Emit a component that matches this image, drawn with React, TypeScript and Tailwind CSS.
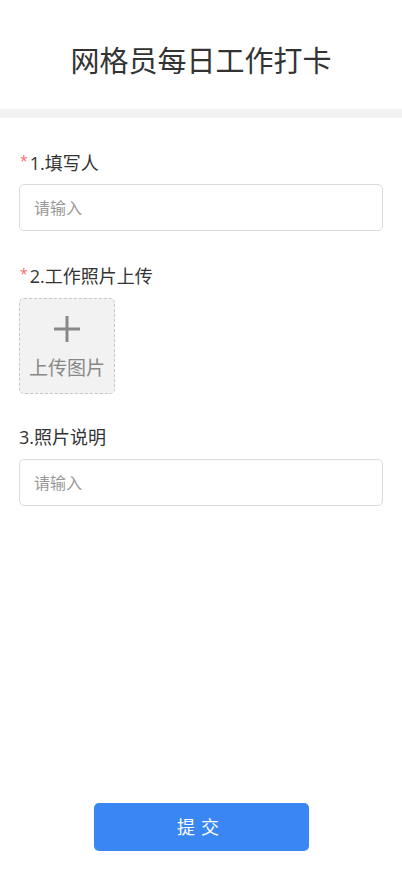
export default function App() {
  const font = { fontFamily: '"Open Sans", "Noto Sans CJK SC", sans-serif' };

  return (
    <div className="flex min-h-screen flex-col bg-white text-[#333]" style={font}>
      {/* Header */}
      <div className="pt-[41px] pb-[28px] text-center text-[29px] leading-[40px]">网格员每日工作打卡</div>
      <div className="h-[9px] bg-[#f2f2f2]" />

      {/* Form */}
      <div className="flex flex-col px-[19px]">
        <div className="mt-[32px] flex items-start text-[18px] leading-[26px]">
          <span className="mr-[2px] ml-[1px] mt-[1px] text-[14px] leading-[20px] text-[#f56c6c]">*</span>
          <span>1.填写人</span>
        </div>
        <input
          placeholder="请输入"
          className="mt-[8px] h-[47px] w-full rounded-[5px] border border-[#dcdcdc] px-[14px] text-[16px] outline-none placeholder:text-[#999]"
        />

        <div className="mt-[32px] flex items-start text-[18px] leading-[26px]">
          <span className="mr-[2px] ml-[1px] mt-[1px] text-[14px] leading-[20px] text-[#f56c6c]">*</span>
          <span>2.工作照片上传</span>
        </div>
        <div className="mt-[9px] flex h-[96px] w-[96px] flex-col items-center justify-center rounded-[5px] border border-dashed border-[#c8c8c8] bg-[#f2f2f2] text-[#888]">
          <svg width="28" height="28" viewBox="0 0 28 28" className="mt-[2px]">
            <path d="M14 1v26M1 14h26" stroke="#888" strokeWidth="3" />
          </svg>
          <span className="mt-[13px] text-[19px] leading-[24px]">上传图片</span>
        </div>

        <div className="mt-[30px] text-[18px] leading-[26px]">3.照片说明</div>
        <input
          placeholder="请输入"
          className="mt-[9px] h-[47px] w-full rounded-[5px] border border-[#dcdcdc] px-[14px] text-[16px] outline-none placeholder:text-[#999]"
        />
      </div>

      {/* Submit */}
      <div className="mt-auto flex justify-center pb-[19px]">
        <button className="h-[48px] w-[215px] rounded-[5px] bg-[#3a87f4] text-[18px] tracking-[6px] text-white">
          提交
        </button>
      </div>
    </div>
  );
}
